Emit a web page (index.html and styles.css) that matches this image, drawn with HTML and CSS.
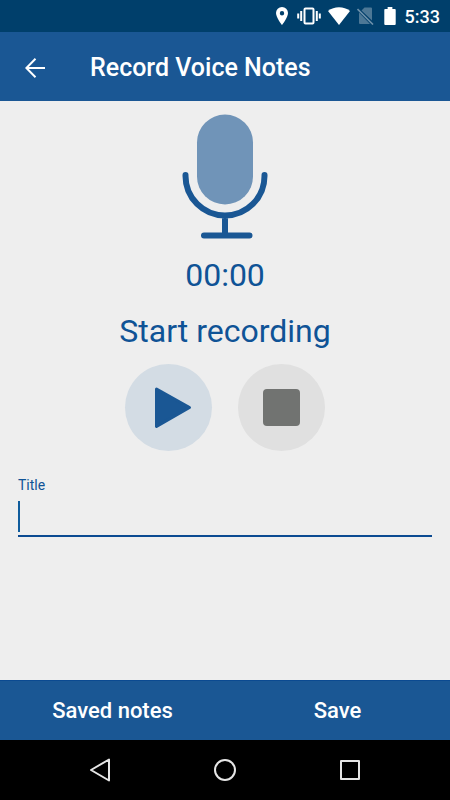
FILE: index.html
```html
<!DOCTYPE html>
<html lang="en">
<head>
<meta charset="utf-8">
<meta name="viewport" content="width=device-width, initial-scale=1">
<title>Record Voice Notes</title>
<link rel="stylesheet" href="styles.css">
</head>
<body>
<div class="status-bar">
  <svg width="12" height="18" viewBox="0 0 12 18" fill="#fff" aria-hidden="true"><path fill-rule="evenodd" d="M6 0a6 6 0 0 0-6 6c0 4.500 6 12 6 12s6-7.500 6-12a6 6 0 0 0-6-6zm0 4a2.200 2.200 0 1 1 0 4.400A2.200 2.200 0 0 1 6 4z"/></svg>
  <svg class="vibrate" width="24" height="18" viewBox="0 0 24 18" fill="none" stroke="#fff" stroke-width="2" aria-hidden="true"><rect x="7.500" y="1.500" width="9" height="15" rx="1"/><path d="M4.200 4v10M1.200 6.500v5M19.800 4v10M22.800 6.500v5" stroke-width="2"/></svg>
  <svg class="wifi" width="22" height="18" viewBox="0 0 22 18" fill="#fff" aria-hidden="true"><path d="M11 18 0 4a18 18 0 0 1 22 0z"/></svg>
  <svg class="sim" width="17" height="18" viewBox="0 0 17 18" aria-hidden="true"><path d="M7.500 .5H14q1 0 1 1v12L4.500 3.500zM2 5.500 13 17H3q-1 0-1-1z" fill="#4d7896"/><path d="m.5 2 15.500 15.500" stroke="#6d91aa" stroke-width="1.600"/></svg>
  <svg class="battery" width="12" height="19" viewBox="0 0 12 20" fill="#fff" aria-hidden="true"><path d="M3.500 0h5v2H11q1 0 1 1v15q0 1-1 1H1q-1 0-1-1V3q0-1 1-1h2.500z"/></svg>
  <span class="clock">5:33</span>
</div>
<header class="app-bar">
  <button class="back" type="button" aria-label="Back">
    <svg width="20" height="20" viewBox="0 0 20 20" fill="none" stroke="#fff" stroke-width="2" aria-hidden="true"><path d="M20 10H1.500M10.500 .8 1.400 10l9.100 9.200"/></svg>
  </button>
  <h1 class="title">Record Voice Notes</h1>
</header>
<main class="content">
  <section class="recorder">
    <svg class="mic" width="86" height="125" viewBox="0 0 86 125" aria-hidden="true">
      <rect x="15" y="0.500" width="56" height="90" rx="28" fill="#7094b8"/>
      <path d="M3.500 61v1a39.500 39.500 0 0 0 79 0v-1M43 102v19M22 121.500h45.500" fill="none" stroke="#1a5794" stroke-width="6" stroke-linecap="round"/>
    </svg>
    <div class="timer">00:00</div>
    <h2 class="state">Start recording</h2>
    <div class="controls">
      <button class="round play" type="button" aria-label="Record">
        <svg width="87" height="87" viewBox="0 0 87 87" aria-hidden="true"><path d="M31.500 25 64.500 43.500 31.500 62.500z" fill="#1a5794" stroke="#1a5794" stroke-width="3" stroke-linejoin="round"/></svg>
      </button>
      <button class="round stop" type="button" aria-label="Stop">
        <svg width="87" height="87" viewBox="0 0 87 87" aria-hidden="true"><rect x="25" y="25" width="37" height="37" rx="4" fill="#717371"/></svg>
      </button>
    </div>
  </section>
  <div class="field">
    <label class="label" for="note-title">Title</label>
    <input class="input" id="note-title" type="text">
    <span class="caret"></span>
  </div>
</main>
<div class="actions">
  <button class="action" type="button">Saved notes</button>
  <button class="action" type="button">Save</button>
</div>
<nav class="system-nav" aria-label="System">
  <button class="nav-key" type="button" aria-label="Back"><svg width="24" height="24" viewBox="0 0 24 24" fill="none" stroke="#e6e6e6" stroke-width="2" stroke-linejoin="round" aria-hidden="true"><path d="M21 1.500v21L3 12z"/></svg></button>
  <button class="nav-key" type="button" aria-label="Home"><svg width="24" height="24" viewBox="0 0 24 24" fill="none" stroke="#e6e6e6" stroke-width="2" aria-hidden="true"><circle cx="12" cy="12" r="10"/></svg></button>
  <button class="nav-key" type="button" aria-label="Overview"><svg width="24" height="24" viewBox="0 0 24 24" fill="none" stroke="#e6e6e6" stroke-width="2" stroke-linejoin="round" aria-hidden="true"><path d="M3 3h18v18H3z"/></svg></button>
</nav>
</body>
</html>
```
FILE: styles.css
```css
* {
  box-sizing: border-box;
}

body {
  margin: 0;
  min-height: 100vh;
  display: flex;
  flex-direction: column;
  background: #eee;
  color: #0f5396;
  font-family: Roboto, sans-serif;
}

button {
  border: 0;
  padding: 0;
  background: none;
  color: inherit;
  font: inherit;
}

svg {
  display: block;
}

.status-bar {
  display: flex;
  align-items: center;
  justify-content: flex-end;
  height: 32px;
  padding-right: 10px;
  background: #003f6b;
  color: #fff;
}

.vibrate,
.clock {
  margin-left: 9px;
}

.wifi,
.sim {
  margin-left: 7px;
}

.battery {
  margin-left: 10px;
}

.clock {
  font-size: 18px;
  font-weight: 500;
}

.app-bar {
  display: flex;
  align-items: center;
  gap: 45px;
  height: 69px;
  padding: 2px 25px 0;
  background: #1a5794;
  color: #fff;
}

.title {
  margin: 0;
  font-size: 25px;
  font-weight: 500;
}

.content {
  flex: 1;
  padding: 13px 18px;
}

.recorder {
  display: flex;
  flex-direction: column;
  align-items: center;
}

.timer,
.state {
  margin: 16px 0 0;
  font-size: 32px;
  font-weight: 400;
  line-height: 40px;
}

.controls {
  display: flex;
  gap: 26px;
  margin-top: 13px;
}

.round {
  border-radius: 50%;
}

.play {
  background: #d3dce4;
}

.stop {
  background: #e0e0e0;
}

.field {
  position: relative;
  margin-top: 25px;
}

.label {
  display: block;
  font-size: 14px;
  line-height: 18px;
}

.input {
  display: block;
  width: 100%;
  height: 43px;
  border: 0;
  border-bottom: 2px solid #0b4a91;
  padding: 0;
  outline: 0;
  background: none;
  color: inherit;
  font: inherit;
  font-size: 22px;
}

.caret {
  position: absolute;
  left: 0;
  bottom: 5px;
  width: 2px;
  height: 31px;
  background: #0f5c9c;
}

.actions {
  display: grid;
  grid-template-columns: 1fr 1fr;
  height: 60px;
  border-top: 1px solid #0b4a91;
  background: #1a5794;
  color: #fff;
}

.action {
  font-size: 22px;
  font-weight: 500;
}

.system-nav {
  display: grid;
  grid-template-columns: repeat(3, 1fr);
  height: 60px;
  padding: 0 37px;
  background: #000;
}

.nav-key {
  display: grid;
  place-items: center;
}
```
